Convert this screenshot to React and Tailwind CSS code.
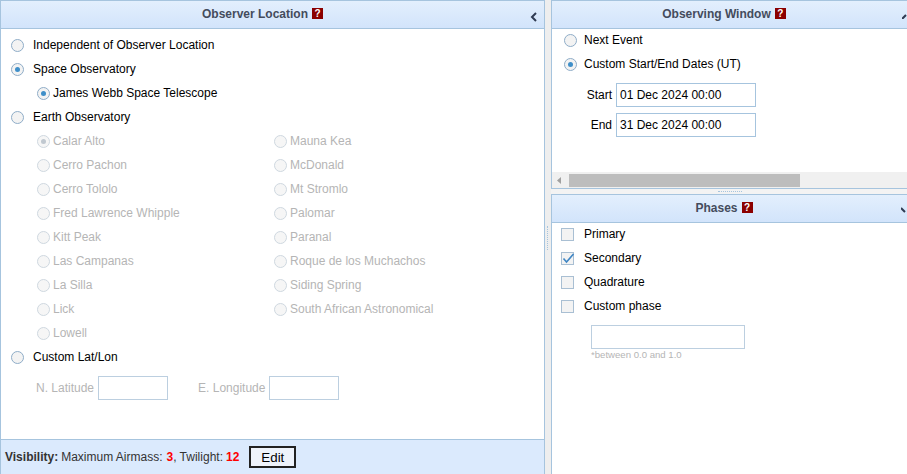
import React from 'react'

function Help() {
  return (
    <span className="ml-[4px] inline-flex h-[11px] w-[11px] items-center justify-center bg-[#8b0000] text-[10px] leading-none font-bold text-white">
      ?
    </span>
  )
}

function Radio({ checked, disabled }) {
  return (
    <span
      className={
        'flex h-[13px] w-[13px] shrink-0 items-center justify-center rounded-full border ' +
        (disabled ? 'border-[#cfd8e0] bg-[#f6f6f6]' : 'border-[#8fadc8] bg-[#f3f3f3]')
      }
    >
      {checked && (
        <span className={'h-[5px] w-[5px] rounded-full ' + (disabled ? 'bg-[#c0c8d0]' : 'bg-[#3f8fc9]')} />
      )}
    </span>
  )
}

function Check({ checked }) {
  return (
    <span className="relative h-[13px] w-[13px] shrink-0 border border-[#a9bfd3] bg-[#f3f3f3]">
      {checked && (
        <svg className="absolute left-0 top-[-1px]" width="13" height="13" viewBox="0 0 13 13" fill="none">
          <path d="M1.5 6.5 L4.5 10 L11.5 2" stroke="#3f86c4" strokeWidth="1.6" />
        </svg>
      )}
    </span>
  )
}

function Row({ children, className = '' }) {
  return <div className={'flex h-6 items-center ' + className}>{children}</div>
}

function Header({ title, icon, pad }) {
  return (
    <div className={'relative flex h-[28px] shrink-0 items-center justify-center border-b border-[#a6c4de] bg-gradient-to-b from-[#e3effd] to-[#d2e4fb] pb-[2px] font-bold text-[#444c5c] ' + pad}>
      <span>{title}</span>
      <Help />
      {icon}
    </div>
  )
}

function Site({ name, checked }) {
  return (
    <Row>
      <Radio checked={checked} disabled />
      <span className="ml-[3px] text-[#b5b5b5]">{name}</span>
    </Row>
  )
}

const leftSites = [
  'Calar Alto',
  'Cerro Pachon',
  'Cerro Tololo',
  'Fred Lawrence Whipple',
  'Kitt Peak',
  'Las Campanas',
  'La Silla',
  'Lick',
  'Lowell',
]

const rightSites = [
  'Mauna Kea',
  'McDonald',
  'Mt Stromlo',
  'Palomar',
  'Paranal',
  'Roque de los Muchachos',
  'Siding Spring',
  'South African Astronomical',
]

export default function App() {
  return (
    <div className="flex h-[474px] w-[907px] overflow-hidden bg-white font-['Liberation_Sans',Arial,sans-serif] text-[12px] text-black">
      {/* Left panel */}
      <div className="flex w-[545px] shrink-0 flex-col border border-b-0 border-[#a6c4de]">
        <Header
          title="Observer Location"
          pad="pr-[20px]"
          icon={
            <svg className="absolute right-[6px] top-[11px]" width="8" height="10" viewBox="0 0 8 10" fill="none">
              <path d="M6 1 L2 5 L6 9" stroke="#2f3b52" strokeWidth="2" />
            </svg>
          }
        />
        <div className="flex-1 pl-[10px] pt-[4px]">
          <Row>
            <Radio />
            <span className="ml-[9px]">Independent of Observer Location</span>
          </Row>
          <Row>
            <Radio checked />
            <span className="ml-[9px]">Space Observatory</span>
          </Row>
          <Row className="pl-[26px]">
            <Radio checked />
            <span className="ml-[3px]">James Webb Space Telescope</span>
          </Row>
          <Row>
            <Radio />
            <span className="ml-[9px]">Earth Observatory</span>
          </Row>
          <div className="flex pl-[26px]">
            <div className="w-[237px]">
              {leftSites.map((s, i) => (
                <Site key={s} name={s} checked={i === 0} />
              ))}
            </div>
            <div>
              {rightSites.map(s => (
                <Site key={s} name={s} />
              ))}
            </div>
          </div>
          <Row>
            <Radio />
            <span className="ml-[9px]">Custom Lat/Lon</span>
          </Row>
          <div className="mt-[7px] flex items-center pl-[25px] text-[#b5b5b5]">
            <span>N. Latitude</span>
            <div className="ml-[4px] h-6 w-[70px] border border-[#bccfe0]" />
            <span className="ml-[30px]">E. Longitude</span>
            <div className="ml-[4px] h-6 w-[70px] border border-[#bccfe0]" />
          </div>
        </div>
        <div className="flex h-[35px] shrink-0 items-center border-t border-[#a6c4de] bg-[#dbeafd] pl-[4px] text-[#333]">
          <b>Visibility:</b>
          <span className="ml-[3px]">Maximum Airmass:</span>
          <b className="ml-[4px] text-[#f00]">3</b>
          <span>, Twilight:</span>
          <b className="ml-[3px] text-[#f00]">12</b>
          <button className="ml-[10px] h-[22px] w-[47px] border-2 border-[#222] bg-[#eef3fb] text-[13.33px] text-black">Edit</button>
        </div>
      </div>

      {/* Vertical resizer */}
      <div className="relative w-[6px] shrink-0 bg-[#eeeeee]">
        <div className="absolute left-[2px] top-[226px] h-[24px] border-l border-dotted border-[#a6c4de]" />
      </div>

      {/* Right column */}
      <div className="flex w-[358px] shrink-0 flex-col">
        <div className="flex h-[189px] shrink-0 flex-col border border-[#a6c4de]">
          <Header
            title="Observing Window"
            pad="pr-[12px]"
            icon={
              <svg className="absolute right-[1px] top-[13px]" width="5" height="5" viewBox="0 0 5 5" fill="none">
                <path d="M0 5 L4 1" stroke="#2f3b52" strokeWidth="2" />
              </svg>
            }
          />
          <div className="-mt-px flex-1 pl-[12px]">
            <Row>
              <Radio />
              <span className="ml-[7px]">Next Event</span>
            </Row>
            <Row>
              <Radio checked />
              <span className="ml-[7px]">Custom Start/End Dates (UT)</span>
            </Row>
            <div className="mt-[7px] flex items-center">
              <span className="w-[48px] text-right">Start</span>
              <div className="ml-[4px] flex h-6 w-[140px] items-center border border-[#a6c4de] pl-[3px]">01 Dec 2024 00:00</div>
            </div>
            <div className="mt-[6px] flex items-center">
              <span className="w-[48px] text-right">End</span>
              <div className="ml-[4px] flex h-6 w-[140px] items-center border border-[#a6c4de] pl-[3px]">31 Dec 2024 00:00</div>
            </div>
          </div>
          {/* Scrollbar */}
          <div className="flex h-[16px] shrink-0 items-center bg-[#f0f0f0]">
            <svg className="ml-[5px]" width="5" height="7" viewBox="0 0 5 7">
              <path d="M4 0 V7 L0 3.5 Z" fill="#a0a0a0" />
            </svg>
            <div className="ml-[7px] h-[13px] w-[231px] bg-[#bdbdbd]" />
          </div>
        </div>

        <div className="flex h-[5px] shrink-0 items-center justify-center bg-[#f3f3f3]">
          <div className="w-[24px] border-t border-dotted border-[#a6c4de]" />
        </div>

        <div className="flex flex-1 flex-col border border-b-0 border-[#a6c4de]">
          <Header
            title="Phases"
            pad="pr-[12px]"
            icon={
              <svg className="absolute right-[1px] top-[12px]" width="6" height="6" viewBox="0 0 6 6" fill="none">
                <path d="M0 1 L4 5" stroke="#2f3b52" strokeWidth="2" />
              </svg>
            }
          />
          <div className="-mt-px pl-[9px]">
            <Row>
              <Check />
              <span className="ml-[10px]">Primary</span>
            </Row>
            <Row>
              <Check checked />
              <span className="ml-[10px]">Secondary</span>
            </Row>
            <Row>
              <Check />
              <span className="ml-[10px]">Quadrature</span>
            </Row>
            <Row>
              <Check />
              <span className="ml-[10px]">Custom phase</span>
            </Row>
            <div className="ml-[30px] mt-[7px] h-6 w-[154px] border border-[#bccfe0]" />
            <div className="ml-[30px] text-[9.6px] leading-[11px] text-[#b5b5b5]">*between 0.0 and 1.0</div>
          </div>
        </div>
      </div>
    </div>
  )
}
